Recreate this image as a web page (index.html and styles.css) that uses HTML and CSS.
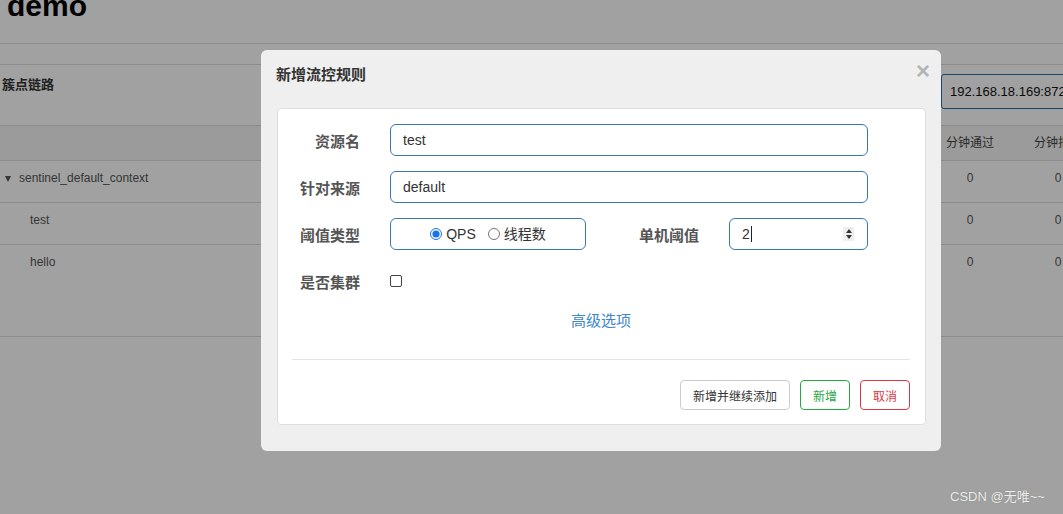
FILE: index.html
```html
<!DOCTYPE html>
<html lang="zh-CN">
<head>
<meta charset="utf-8">
<title>demo</title>
<link rel="stylesheet" href="styles.css">
</head>
<body>
<div class="page">
  <header class="topbar"><h1 class="app-title">demo</h1></header>
  <section class="panel">
    <div class="panel-head">
      <span class="panel-title">簇点链路</span>
      <div class="machine-select">192.168.18.169:8720</div>
    </div>
    <div class="table">
      <div class="tr th">
        <div class="td name"></div>
        <div class="td num">分钟通过</div>
        <div class="td num">分钟拒绝</div>
      </div>
      <div class="tr">
        <div class="td name"><span class="caret"></span>sentinel_default_context</div>
        <div class="td num">0</div>
        <div class="td num">0</div>
      </div>
      <div class="tr">
        <div class="td name child">test</div>
        <div class="td num">0</div>
        <div class="td num">0</div>
      </div>
      <div class="tr tall">
        <div class="td name child">hello</div>
        <div class="td num">0</div>
        <div class="td num">0</div>
      </div>
    </div>
  </section>
</div>

<div class="overlay"></div>

<div class="modal">
  <div class="modal-header">
    <span class="modal-title">新增流控规则</span>
    <span class="close">×</span>
  </div>
  <div class="modal-body">
    <div class="card">
      <div class="form-row">
        <label class="label">资源名</label>
        <div class="input wide">test</div>
      </div>
      <div class="form-row">
        <label class="label">针对来源</label>
        <div class="input wide">default</div>
      </div>
      <div class="form-row">
        <label class="label">阈值类型</label>
        <div class="input radio-box">
          <label class="radio"><input type="radio" name="grade" checked>QPS</label>
          <label class="radio"><input type="radio" name="grade">线程数</label>
        </div>
        <label class="label label2">单机阈值</label>
        <div class="input number">
          <span class="num-val">2</span><span class="cursor"></span>
          <span class="spin"><span class="up"></span><span class="down"></span></span>
        </div>
      </div>
      <div class="form-row short">
        <label class="label">是否集群</label>
        <span class="checkbox"></span>
      </div>
      <div class="advanced">高级选项</div>
      <div class="divider"></div>
      <div class="actions">
        <button class="btn btn-default">新增并继续添加</button>
        <button class="btn btn-success">新增</button>
        <button class="btn btn-danger">取消</button>
      </div>
    </div>
  </div>
</div>

<div class="watermark">CSDN @无唯~~</div>
</body>
</html>
```

FILE: styles.css
```css
html, body {
  margin: 0;
  padding: 0;
  width: 1063px;
  height: 514px;
  overflow: hidden;
  background: #fff;
  font-family: "Liberation Sans", "Noto Sans CJK SC", sans-serif;
  color: #555;
}

.page {
  width: 1063px;
}

.topbar {
  height: 43px;
  border-bottom: 1px solid #dcdcdc;
  overflow: hidden;
}

.app-title {
  margin: -9px 0 0 7px;
  font-size: 30px;
  line-height: 30px;
  font-weight: bold;
  color: #000;
}

.panel {
  margin-top: 20px;
  border-top: 1px solid #dcdcdc;
}

.panel-head {
  height: 60px;
  display: flex;
  align-items: flex-start;
  justify-content: space-between;
  overflow: hidden;
}

.panel-title {
  margin: 10px 0 0 2px;
  font-size: 13px;
  line-height: 20px;
  font-weight: bold;
  color: #333;
}

.machine-select {
  margin-top: 9px;
  margin-right: -40px;
  width: 162px;
  height: 35px;
  box-sizing: border-box;
  border: 1px solid #2f6ea8;
  border-radius: 3px;
  padding-left: 8px;
  font-size: 13px;
  line-height: 33px;
  color: #111;
  white-space: nowrap;
  overflow: hidden;
}

.table {
  border-top: 1px solid #dcdcdc;
  overflow: hidden;
}

.tr {
  display: flex;
  height: 41px;
  border-bottom: 1px solid #dcdcdc;
}

.tr.th {
  height: 34px;
  background: #f6f6f6;
}

.tr.tall {
  height: 91px;
}

.td {
  font-size: 12px;
  line-height: 18px;
  padding-top: 8px;
  color: #555;
  white-space: nowrap;
  box-sizing: border-box;
}

.th .td {
  padding-top: 8px;
  color: #444;
}

.td.name {
  width: 926px;
  flex: none;
  padding-left: 4px;
  display: flex;
  align-items: flex-start;
}

.td.child {
  padding-left: 30px;
}

.td.num {
  width: 88px;
  flex: none;
  text-align: center;
}

.caret {
  width: 0;
  height: 0;
  border-left: 3px solid transparent;
  border-right: 3px solid transparent;
  border-top: 6px solid #555;
  margin: 7px 8px 0 1px;
}

.overlay {
  position: absolute;
  inset: 0;
  background: rgba(0, 0, 0, 0.37);
}

.modal {
  position: absolute;
  left: 261px;
  top: 50px;
  width: 680px;
  height: 401px;
  box-sizing: border-box;
  background: #efefef;
  border-radius: 6px;
  font-family: "Liberation Sans", "Noto Sans CJK SC", sans-serif;
}

.modal-header {
  height: 58px;
  box-sizing: border-box;
  padding: 15px 11px 0 15px;
  display: flex;
  justify-content: space-between;
  align-items: flex-start;
}

.modal-title {
  font-size: 15px;
  line-height: 20px;
  font-weight: bold;
  color: #333;
}

.close {
  margin-top: -6px;
  font-size: 24px;
  line-height: 24px;
  font-weight: bold;
  color: #b4b4b4;
}

.modal-body {
  padding: 0 15px 0 16px;
}

.card {
  background: #fff;
  border: 1px solid #dedede;
  border-radius: 4px;
  padding: 15px 15px 14px 14px;
  display: flex;
  flex-direction: column;
}

.form-row {
  display: flex;
  align-items: center;
  height: 32px;
  margin-bottom: 15px;
}

.form-row.short {
  margin-bottom: 0;
}

.label {
  width: 68px;
  margin-right: 30px;
  text-align: right;
  font-size: 15px;
  font-weight: bold;
  color: #555;
  flex: none;
  white-space: nowrap;
}

.label2 {
  width: 113px;
}

.input {
  height: 32px;
  box-sizing: border-box;
  border: 1px solid #3a78b5;
  border-radius: 6px;
  padding-left: 12px;
  font-size: 14px;
  line-height: 30px;
  color: #333;
  background: #fff;
}

.input.wide {
  width: 478px;
}

.radio-box {
  width: 196px;
  padding-left: 0;
  display: flex;
  justify-content: center;
  align-items: center;
  gap: 12px;
}

.radio {
  display: flex;
  align-items: center;
  font-size: 14px;
  color: #333;
}

.radio input {
  margin: 0 4px 0 0;
  width: 12px;
  height: 12px;
  accent-color: #1a73e8;
}

.input.number {
  width: 139px;
  display: flex;
  align-items: center;
}

.num-val {
  font-size: 14px;
  color: #333;
}

.cursor {
  width: 1px;
  height: 16px;
  background: #222;
  margin-left: 1px;
}

.spin {
  margin-left: auto;
  margin-right: 13px;
  width: 11px;
  height: 14px;
  background: #efefef;
  display: flex;
  flex-direction: column;
  align-items: center;
  justify-content: center;
  gap: 2px;
}

.spin .up {
  width: 0;
  height: 0;
  border-left: 3px solid transparent;
  border-right: 3px solid transparent;
  border-bottom: 4px solid #333;
}

.spin .down {
  width: 0;
  height: 0;
  border-left: 3px solid transparent;
  border-right: 3px solid transparent;
  border-top: 4px solid #333;
}

.checkbox {
  width: 12px;
  height: 12px;
  box-sizing: border-box;
  border: 1px solid #444;
  border-radius: 2px;
}

.advanced {
  margin-top: 14px;
  text-align: center;
  font-size: 15px;
  line-height: 20px;
  color: #3c87c9;
}

.divider {
  margin-top: 28px;
  height: 1px;
  background: #e3e3e3;
}

.actions {
  margin-top: 20px;
  display: flex;
  justify-content: flex-end;
  gap: 10px;
}

.btn {
  height: 30px;
  box-sizing: border-box;
  background: #fff;
  border: 1px solid #ccc;
  border-radius: 4px;
  font-family: "Liberation Sans", "Noto Sans CJK SC", sans-serif;
  font-size: 12px;
  padding: 0;
  color: #333;
}

.btn-default {
  width: 110px;
}

.btn-success {
  border-color: #28a745;
  color: #28a745;
  width: 50px;
}

.btn-danger {
  border-color: #dc3545;
  color: #dc3545;
  width: 50px;
}

.watermark {
  position: absolute;
  left: 950px;
  top: 488px;
  font-size: 13px;
  line-height: 18px;
  color: #eeeeee;
  text-shadow: 0 0 1px #777;
}
```
